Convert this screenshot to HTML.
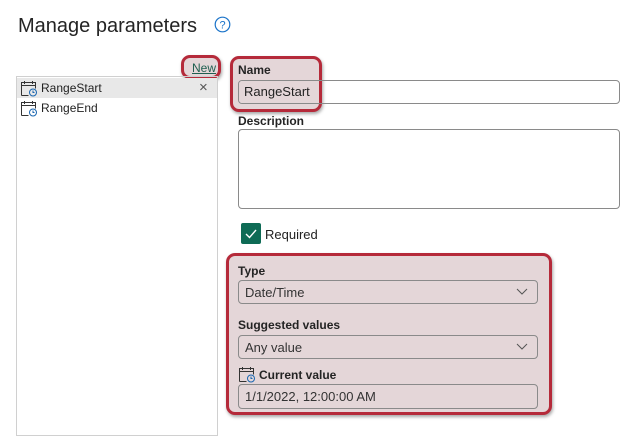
<!DOCTYPE html>
<html><head><meta charset="utf-8"><style>
*{box-sizing:border-box;margin:0;padding:0}
body{width:632px;height:425px;background:#fff;position:relative;overflow:hidden;font-family:"Liberation Sans",sans-serif;color:#222}
.a{position:absolute}
.lbl{position:absolute;font-size:12px;font-weight:bold;color:#242424}
.inp{position:absolute;border:1px solid #8a8a8a;border-radius:4px;font-size:13px;padding-left:6px;display:flex;align-items:center;color:#333}
.red{position:absolute;border:3px solid #b52a3a;border-radius:9px;box-shadow:1px 2px 3px rgba(0,0,0,.35)}
.chev{position:absolute;right:9px;top:6px}
</style></head><body>
<div class="a" style="left:18px;top:15px;font-size:20px;color:#242424">Manage parameters</div>
<svg class="a" style="left:214px;top:16px" width="17" height="17" viewBox="0 0 17 17"><circle cx="8.5" cy="8.5" r="7.3" fill="none" stroke="#1a73c9" stroke-width="1.2"/><text x="8.5" y="12.5" font-size="11" text-anchor="middle" fill="#1a73c9" font-family="Liberation Sans">?</text></svg>

<div class="red" style="left:181px;top:55px;width:40px;height:24px;background:#e4d6d8"></div>
<div class="a" style="left:192px;top:61px;font-size:12px;color:#1f5f50;text-decoration:underline">New</div>

<div class="a" style="left:16px;top:76px;width:202px;height:360px;border:1px solid #d0d0d0"></div>
<div class="a" style="left:17px;top:78px;width:200px;height:20px;background:#e8e8e8"></div>
<svg class="a" style="left:20px;top:80px" width="18" height="17" viewBox="0 0 18 17"><g fill="none" stroke="#333" stroke-width="1"><path d="M1.5 15.5V2.5h14v6M1.5 5.5h14M4.5 1v3M12.5 1v3M1.5 15.5h7"/><circle cx="13" cy="12.5" r="3.5" stroke="#1a66b0"/><path d="M13 10.5v2h1.5" stroke="#1a66b0"/></g></svg>
<div class="a" style="left:41px;top:81px;font-size:12px">RangeStart</div>
<div class="a" style="left:199px;top:79px;font-size:15px;color:#555">×</div>
<svg class="a" style="left:20px;top:100px" width="18" height="17" viewBox="0 0 18 17"><g fill="none" stroke="#333" stroke-width="1"><path d="M1.5 15.5V2.5h14v6M1.5 5.5h14M4.5 1v3M12.5 1v3M1.5 15.5h7"/><circle cx="13" cy="12.5" r="3.5" stroke="#1a66b0"/><path d="M13 10.5v2h1.5" stroke="#1a66b0"/></g></svg>
<div class="a" style="left:41px;top:101px;font-size:12px">RangeEnd</div>

<div class="red" style="left:230px;top:56px;width:92px;height:56px;background:#e4d6d8"></div>
<div class="lbl" style="left:238px;top:63px">Name</div>
<div class="inp" style="left:238px;top:80px;width:382px;height:24px">RangeStart</div>
<div class="a" style="left:239px;top:81px;width:77px;height:22px;background:#e4d6d8;border-radius:3px 0 0 3px;font-size:13px;padding-left:5px;line-height:22px">RangeStart</div>
<div class="lbl" style="left:238px;top:114px">Description</div>
<div class="inp" style="left:238px;top:129px;width:382px;height:80px"></div>

<div class="a" style="left:241px;top:223px;width:20px;height:21px;background:#0e6b55;border-radius:2px"></div>
<svg class="a" style="left:244px;top:227px" width="14" height="13"><path d="M2 7l3.5 3.5L12 3" fill="none" stroke="#fff" stroke-width="1.4"/></svg>
<div class="a" style="left:265px;top:227px;font-size:13px">Required</div>

<div class="red" style="left:226px;top:253px;width:326px;height:162px;background:#e4d6d8"></div>
<div class="lbl" style="left:238px;top:264px">Type</div>
<div class="inp" style="left:238px;top:280px;width:300px;height:24px;background:#e4d6d8">Date/Time<svg class="chev" width="12" height="10"><path d="M1 2l5 5 5-5" fill="none" stroke="#555"/></svg></div>
<div class="lbl" style="left:238px;top:318px">Suggested values</div>
<div class="inp" style="left:238px;top:335px;width:300px;height:24px;background:#e4d6d8">Any value<svg class="chev" width="12" height="10"><path d="M1 2l5 5 5-5" fill="none" stroke="#555"/></svg></div>
<svg class="a" style="left:238px;top:366px" width="18" height="17" viewBox="0 0 18 17"><g fill="none" stroke="#333" stroke-width="1"><path d="M1.5 15.5V2.5h14v6M1.5 5.5h14M4.5 1v3M12.5 1v3M1.5 15.5h7"/><circle cx="13" cy="12.5" r="3.5" stroke="#1a66b0"/><path d="M13 10.5v2h1.5" stroke="#1a66b0"/></g></svg>
<div class="lbl" style="left:259px;top:368px">Current value</div>
<div class="inp" style="left:238px;top:384px;width:300px;height:25px;background:#e4d6d8">1/1/2022, 12:00:00 AM</div>
</body></html>
